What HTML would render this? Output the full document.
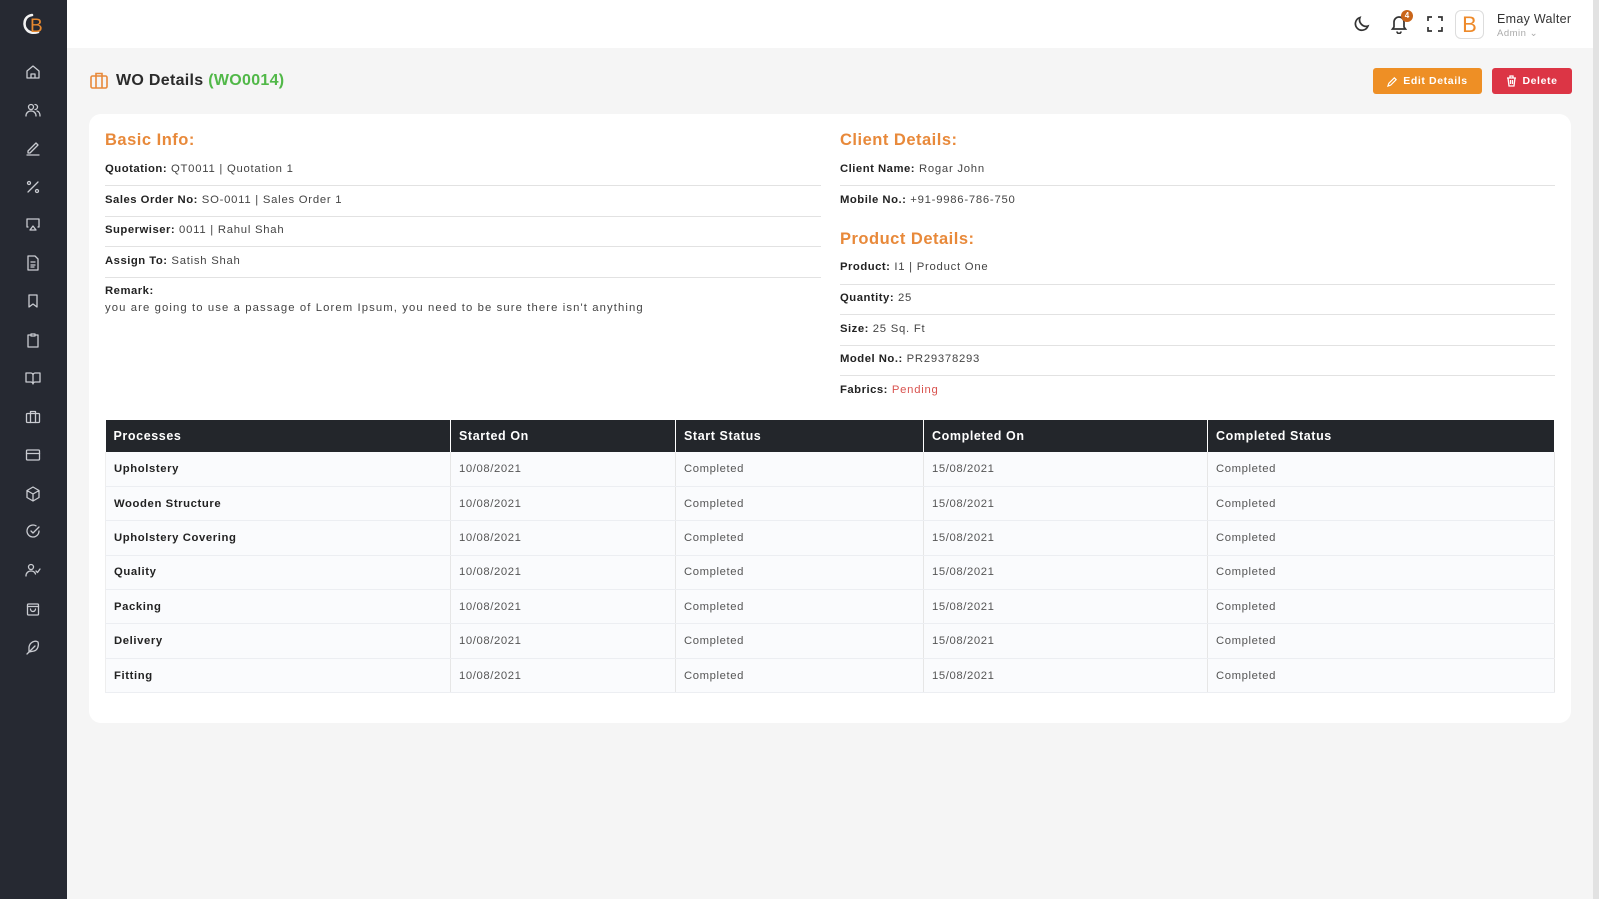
<!DOCTYPE html>
<html><head><meta charset="utf-8"><style>
*{box-sizing:border-box;margin:0;padding:0}
body{width:1599px;height:899px;overflow:hidden;background:#f5f5f5;font-family:"Liberation Sans",sans-serif;color:#2b2b2b;position:relative}
.sb{position:absolute;left:0;top:0;width:67px;height:899px;background:#262932}
.sb svg{position:absolute;left:25px;width:16px;height:16px;fill:none;stroke:#c9cbd1;stroke-width:1.3;stroke-linecap:round;stroke-linejoin:round}
.top{position:absolute;left:67px;top:0;width:1527px;height:48px;background:#fff}
.scroll{position:absolute;left:1593px;top:0;width:6px;height:899px;background:#e2e2e2}
.card{position:absolute;left:89px;top:114px;width:1482px;height:609px;background:#fff;border-radius:12px}
h3{position:absolute;color:#e8893a;font-size:16.5px;font-weight:bold;letter-spacing:.5px}
.row{position:absolute;font-size:11.3px;letter-spacing:.75px;color:#444}
.row b{color:#222;letter-spacing:.5px}
.ln{position:absolute;height:1px;background:#e2e2e2}
table{position:absolute;left:105px;top:420px;width:1450px;border-collapse:collapse;font-size:11.3px;letter-spacing:.6px}
th{background:#23262b;color:#fff;text-align:left;height:32px;padding-left:8px;font-size:12.5px;border-right:1px solid #fff}
td{height:34.4px;padding-left:8px;color:#555;border-bottom:1px solid #eceef2;border-right:1px solid #e6e6e6;background:#fafbfd}
td:first-child{font-weight:bold;color:#222;border-left:1px solid #eee}
.btn{position:absolute;top:68px;height:26px;border-radius:3px;color:#fff;font-size:10.5px;font-weight:bold;letter-spacing:.6px;display:flex;align-items:center;justify-content:center;gap:5px}
</style></head><body>
<div class="sb">
<svg style="left:20px;top:11px;width:26px;height:26px" viewBox="0 0 26 26"><path d="M12 4 C4 5 2 15 8 20 C11 22 15 22 18 21" stroke="#f2f2f2" stroke-width="2.6" fill="none"/><text x="10" y="21" font-family="Liberation Sans" font-size="19" fill="#e8892f" stroke="none">B</text></svg>
<svg style="top:64px" viewBox="0 0 16 16"><path d="M2 7l6-5 6 5v7H2z M6 14V10h4v4"/></svg>
<svg style="top:102px" viewBox="0 0 16 16"><circle cx="6" cy="5" r="2.5"/><path d="M1 14c0-3 2-5 5-5s5 2 5 5M10 2.5a2.5 2.5 0 010 5M12 9c2 .5 3 2.5 3 5"/></svg>
<svg style="top:140px" viewBox="0 0 16 16"><path d="M3 11l8-8 2 2-8 8H3zM2 15h12"/></svg>
<svg style="top:179px" viewBox="0 0 16 16"><path d="M13 3L3 13"/><circle cx="4" cy="4" r="1.5"/><circle cx="12" cy="12" r="1.5"/></svg>
<svg style="top:216px" viewBox="0 0 16 16"><path d="M3 11H2V3h12v8h-1M5 14l3-4 3 4z"/></svg>
<svg style="top:255px" viewBox="0 0 16 16"><path d="M3 1h7l3 3v11H3zM6 7h4M6 10h4M6 12h3"/></svg>
<svg style="top:293px" viewBox="0 0 16 16"><path d="M4 2h8v12l-4-3-4 3z"/></svg>
<svg style="top:332px" viewBox="0 0 16 16"><path d="M5 3H3v12h10V3h-2M6 2h4v2H6z"/></svg>
<svg style="top:370px" viewBox="0 0 16 16"><path d="M1 3h5c1 0 2 1 2 2v9c0-1-1-2-2-2H1zM15 3h-5c-1 0-2 1-2 2v9c0-1 1-2 2-2h5z"/></svg>
<svg style="top:409px" viewBox="0 0 16 16"><rect x="1.5" y="4.5" width="13" height="9" rx="1"/><path d="M5.5 4.5V2.5h5v2M5.5 4.5v9M10.5 4.5v9"/></svg>
<svg style="top:447px" viewBox="0 0 16 16"><rect x="1.5" y="3" width="13" height="10" rx="1"/><path d="M1.5 6.5h13"/></svg>
<svg style="top:486px" viewBox="0 0 16 16"><path d="M8 1l6 3.5v7L8 15l-6-3.5v-7zM2 4.5L8 8l6-3.5M8 8v7"/></svg>
<svg style="top:523px" viewBox="0 0 16 16"><path d="M14 8a6 6 0 11-3-5.2M6 8l2 2 6-6"/></svg>
<svg style="top:562px" viewBox="0 0 16 16"><circle cx="6" cy="5" r="2.5"/><path d="M1 14c0-3 2-5 5-5s4 1.5 4.5 3M11 9l1.5 1.5L15 7"/></svg>
<svg style="top:601px" viewBox="0 0 16 16"><rect x="2.5" y="3" width="11" height="11" rx="1"/><path d="M2.5 5.5h11M5.5 8a2.5 2.5 0 005 0"/></svg>
<svg style="top:639px" viewBox="0 0 16 16"><path d="M13 3c-3-2-8 0-9 5v5l5-1c4-1 5-6 4-9zM2 15l8-8"/></svg>
</div>
<div class="top">
<svg style="position:absolute;left:1287px;top:14px" width="18" height="18" viewBox="0 0 18 18" fill="none" stroke="#333" stroke-width="1.7"><path d="M14 12A6.5 6.5 0 016 3.5 6.5 6.5 0 1014 12z"/></svg>
<svg style="position:absolute;left:1323px;top:14px" width="18" height="20" viewBox="0 0 18 20" fill="none" stroke="#333" stroke-width="1.7"><path d="M4 13V8a5 5 0 0110 0v5l1.5 2h-13zM7 17.5a2 2 0 004 0"/></svg>
<div style="position:absolute;left:1334px;top:10px;width:12px;height:12px;border-radius:6px;background:#c9651a;color:#fff;font-size:8px;font-weight:bold;text-align:center;line-height:12px">4</div>
<svg style="position:absolute;left:1360px;top:16px" width="16" height="16" viewBox="0 0 16 16" fill="none" stroke="#333" stroke-width="1.7"><path d="M1 5V1h4M11 1h4v4M15 11v4h-4M5 15H1v-4"/></svg>
<div style="position:absolute;left:1388px;top:10px;width:29px;height:29px;border:1px solid #ddd;border-radius:6px;background:#fff;color:#ee8a2a;font-size:22px;text-align:center;line-height:28px">B</div>
<div style="position:absolute;left:1430px;top:12px;font-size:12.5px;color:#333;letter-spacing:.3px">Emay Walter</div>
<div style="position:absolute;left:1430px;top:28px;font-size:9.5px;color:#aaa;letter-spacing:.5px">Admin ⌄</div>
</div>
<div class="scroll"></div>
<svg style="position:absolute;left:90px;top:72px" width="18" height="17" viewBox="0 0 18 17" fill="none" stroke="#e8893a" stroke-width="1.6"><rect x="1" y="4" width="16" height="12" rx="1.5"/><path d="M6 4V1.5h6V4M6 4v12M12 4v12"/></svg>
<div style="position:absolute;left:116px;top:72px;font-size:16px;font-weight:bold;color:#2b2b2b;letter-spacing:.3px">WO Details <span style="color:#51b848">(WO0014)</span></div>
<div class="btn" style="left:1373px;width:109px;background:#ee8f25"><svg width="11" height="11" viewBox="0 0 12 12" fill="none" stroke="#fff" stroke-width="1.3"><path d="M1 11l1-3 6-6 2 2-6 6z"/></svg>Edit Details</div>
<div class="btn" style="left:1492px;width:80px;background:#dc3545"><svg width="11" height="12" viewBox="0 0 11 12" fill="none" stroke="#fff" stroke-width="1.3"><path d="M1 3h9M4 3V1h3v2M2 3l1 8h5l1-8M4.5 5v4M6.5 5v4"/></svg>Delete</div>
<div class="card"></div>
<h3 style="left:105px;top:131px">Basic Info:</h3>
<div class="row" style="left:105px;top:163px"><b>Quotation:</b> QT0011 | Quotation 1</div>
<div class="ln" style="left:105px;width:716px;top:185px"></div>
<div class="row" style="left:105px;top:194px"><b>Sales Order No:</b> SO-0011 | Sales Order 1</div>
<div class="ln" style="left:105px;width:716px;top:216px"></div>
<div class="row" style="left:105px;top:224px"><b>Superwiser:</b> 0011 | Rahul Shah</div>
<div class="ln" style="left:105px;width:716px;top:246px"></div>
<div class="row" style="left:105px;top:255px"><b>Assign To:</b> Satish Shah</div>
<div class="ln" style="left:105px;width:716px;top:277px"></div>
<div class="row" style="left:105px;top:285px"><b>Remark:</b></div>
<div class="row" style="left:105px;top:302px;letter-spacing:1.1px">you are going to use a passage of Lorem Ipsum, you need to be sure there isn't anything</div>
<h3 style="left:840px;top:131px">Client Details:</h3>
<div class="row" style="left:840px;top:163px"><b>Client Name:</b> Rogar John</div>
<div class="ln" style="left:840px;width:715px;top:185px"></div>
<div class="row" style="left:840px;top:194px"><b>Mobile No.:</b> +91-9986-786-750</div>
<h3 style="left:840px;top:230px">Product Details:</h3>
<div class="row" style="left:840px;top:261px"><b>Product:</b> I1 | Product One</div>
<div class="ln" style="left:840px;width:715px;top:284px"></div>
<div class="row" style="left:840px;top:292px"><b>Quantity:</b> 25</div>
<div class="ln" style="left:840px;width:715px;top:314px"></div>
<div class="row" style="left:840px;top:323px"><b>Size:</b> 25 Sq. Ft</div>
<div class="ln" style="left:840px;width:715px;top:345px"></div>
<div class="row" style="left:840px;top:353px"><b>Model No.:</b> PR29378293</div>
<div class="ln" style="left:840px;width:715px;top:375px"></div>
<div class="row" style="left:840px;top:384px"><b>Fabrics:</b> <span style="color:#d9534f">Pending</span></div>
<table>
<colgroup><col style="width:345px"><col style="width:225px"><col style="width:248px"><col style="width:284px"><col></colgroup>
<tr><th>Processes</th><th>Started On</th><th>Start Status</th><th>Completed On</th><th>Completed Status</th></tr>
<tr><td>Upholstery</td><td>10/08/2021</td><td>Completed</td><td>15/08/2021</td><td>Completed</td></tr>
<tr><td>Wooden Structure</td><td>10/08/2021</td><td>Completed</td><td>15/08/2021</td><td>Completed</td></tr>
<tr><td>Upholstery Covering</td><td>10/08/2021</td><td>Completed</td><td>15/08/2021</td><td>Completed</td></tr>
<tr><td>Quality</td><td>10/08/2021</td><td>Completed</td><td>15/08/2021</td><td>Completed</td></tr>
<tr><td>Packing</td><td>10/08/2021</td><td>Completed</td><td>15/08/2021</td><td>Completed</td></tr>
<tr><td>Delivery</td><td>10/08/2021</td><td>Completed</td><td>15/08/2021</td><td>Completed</td></tr>
<tr><td>Fitting</td><td>10/08/2021</td><td>Completed</td><td>15/08/2021</td><td>Completed</td></tr>
</table>
</body></html>
